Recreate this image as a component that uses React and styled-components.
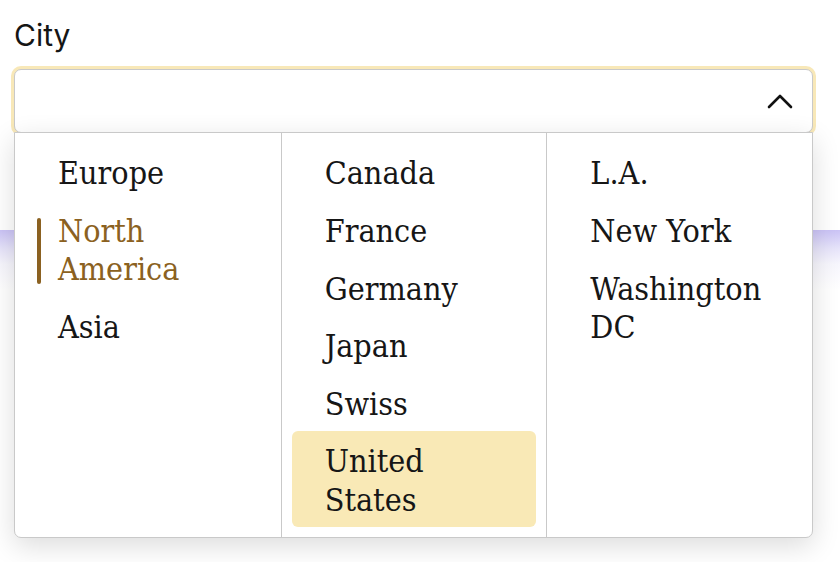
import React from "react";
import styled, { createGlobalStyle } from "styled-components";

const GlobalStyle = createGlobalStyle`
  html, body { margin: 0; padding: 0; background: #ffffff; }
  body { font-family: Inter, "Noto Sans", sans-serif; color: #141414; }
  * { box-sizing: border-box; }
`;

const Page = styled.div`
  width: 840px;
  height: 562px;
  overflow: hidden;
  padding-top: 17px;
`;

const Field = styled.div`
  padding-left: 14px;
  width: 813px;
`;

const Label = styled.div`
  font-family: Inter, "Noto Sans", sans-serif;
  font-size: 30px;
  line-height: 36px;
  color: #151515;
  margin-bottom: 16px;
`;

const SelectBox = styled.div`
  position: relative;
  width: 799px;
`;

const Trigger = styled.div`
  height: 64px;
  border: 1px solid #c9c9c9;
  border-radius: 7px;
  box-shadow: 0 0 0 3px #f8e8b8;
  background: #ffffff;
  display: flex;
  align-items: center;
  justify-content: flex-end;
  padding-right: 19px;
`;

const Panel = styled.div`
  position: absolute;
  top: 63px;
  left: 0;
  right: 0;
  z-index: 2;
  background: #ffffff;
  border: 1px solid #c9c9c9;
  border-radius: 0 0 7px 7px;
  box-shadow: 0 8px 28px rgba(0, 0, 0, 0.14);
  display: grid;
  grid-template-columns: repeat(3, 1fr);
`;

const Column = styled.div`
  padding: 10px;
  border-left: ${(p) => (p.$first ? "none" : "1px solid #c9c9c9")};
`;

const Item = styled.div`
  position: relative;
  font-family: "DejaVu Serif", "Liberation Serif", serif;
  font-stretch: condensed;
  font-size: 32px;
  line-height: 38.4px;
  padding: 11.4px 20px 7.8px 33px;
  border-radius: 6px;
  color: ${(p) => (p.$active ? "#8b6121" : "#161616")};
  background: ${(p) => (p.$selected ? "#f9e9b6" : "transparent")};

  &::before {
    content: "";
    display: ${(p) => (p.$active ? "block" : "none")};
    position: absolute;
    left: 12px;
    top: 17px;
    bottom: 13px;
    width: 4px;
    border-radius: 2px;
    background: #8b6121;
  }
`;

const Backdrop = styled.div`
  margin-top: 97px;
  height: 200px;
  background: linear-gradient(180deg, #cbc3f6 0px, #e6e3fa 18px, #f7f6fd 34px, #ffffff 60px);
`;

const Chevron = () => (
  <svg width="26" height="16" viewBox="0 0 26 16" fill="none">
    <polyline
      points="2,14 13,3 24,14"
      stroke="#111111"
      strokeWidth="2.6"
      strokeLinecap="round"
      strokeLinejoin="round"
    />
  </svg>
);

const columns = [
  [
    { label: "Europe" },
    { label: "North America", active: true },
    { label: "Asia" },
  ],
  [
    { label: "Canada" },
    { label: "France" },
    { label: "Germany" },
    { label: "Japan" },
    { label: "Swiss" },
    { label: "United States", selected: true },
  ],
  [{ label: "L.A." }, { label: "New York" }, { label: "Washington DC" }],
];

export default function App() {
  return (
    <>
      <GlobalStyle />
      <Page>
        <Field>
          <Label>City</Label>
          <SelectBox>
            <Trigger>
              <Chevron />
            </Trigger>
            <Panel>
              {columns.map((col, i) => (
                <Column key={i} $first={i === 0}>
                  {col.map((it) => (
                    <Item key={it.label} $active={it.active} $selected={it.selected}>
                      {it.label}
                    </Item>
                  ))}
                </Column>
              ))}
            </Panel>
          </SelectBox>
        </Field>
        <Backdrop />
      </Page>
    </>
  );
}
